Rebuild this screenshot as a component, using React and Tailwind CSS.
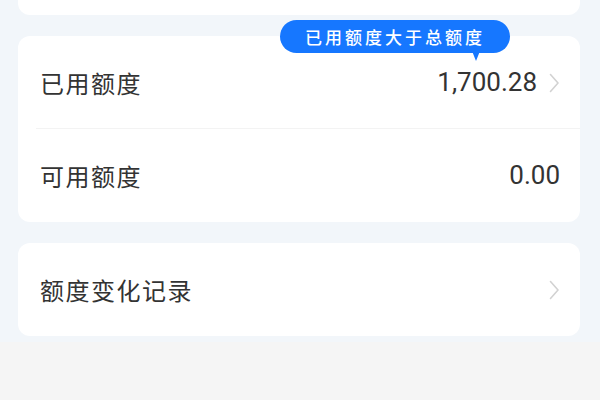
const font = { fontFamily: '"Noto Sans CJK SC", Roboto, "Noto Sans", sans-serif' };

function Chevron() {
  return (
    <svg width="12" height="22" viewBox="0 0 12 22" fill="none">
      <path d="M2.5 2.5 L10 11 L2.5 19.5" stroke="#d2d2d2" strokeWidth="1.6" strokeLinecap="round" strokeLinejoin="round" />
    </svg>
  );
}

function Row({ label, value, arrow, tip, last }) {
  return (
    <div className="relative flex h-[93px] items-center pl-[22px] pr-[20px]">
      <span className="text-[24px] tracking-[1.5px] text-[#333333]">{label}</span>
      <div className="ml-auto flex items-center gap-[11px]">
        {value && (
          <span className="font-['Roboto'] text-[26px] text-[#333333]">{value}</span>
        )}
        {arrow && <Chevron />}
      </div>
      {tip && (
        <div className="absolute right-[70px] top-[-16px]">
          <div className="flex h-[33px] w-[230px] items-center justify-center rounded-full bg-[#1677ff] text-[17px] font-medium tracking-[3px] text-white">
            {tip}
          </div>
          <div className="absolute right-[30px] top-[31px] h-0 w-0 border-x-[4px] border-t-[10px] border-x-transparent border-t-[#1677ff]" />
        </div>
      )}
      {!last && (
        <div className="absolute bottom-0 left-[18px] right-0 h-px bg-[#f3f3f3]" />
      )}
    </div>
  );
}

export default function App() {
  return (
    <div className="flex h-[400px] w-[600px] flex-col overflow-hidden bg-[#f5f5f5]" style={font}>
      <div className="bg-[#f2f6fa] pl-[18px] pr-[20px] pb-[6px]">
        <div className="h-[15px] rounded-b-[12px] bg-white" />
        <div className="mt-[21px] rounded-[12px] bg-white">
          <Row label="已用额度" value="1,700.28" arrow tip="已用额度大于总额度" />
          <Row label="可用额度" value="0.00" last />
        </div>
        <div className="mt-[21px] rounded-[12px] bg-white">
          <Row label="额度变化记录" arrow last />
        </div>
      </div>
    </div>
  );
}
